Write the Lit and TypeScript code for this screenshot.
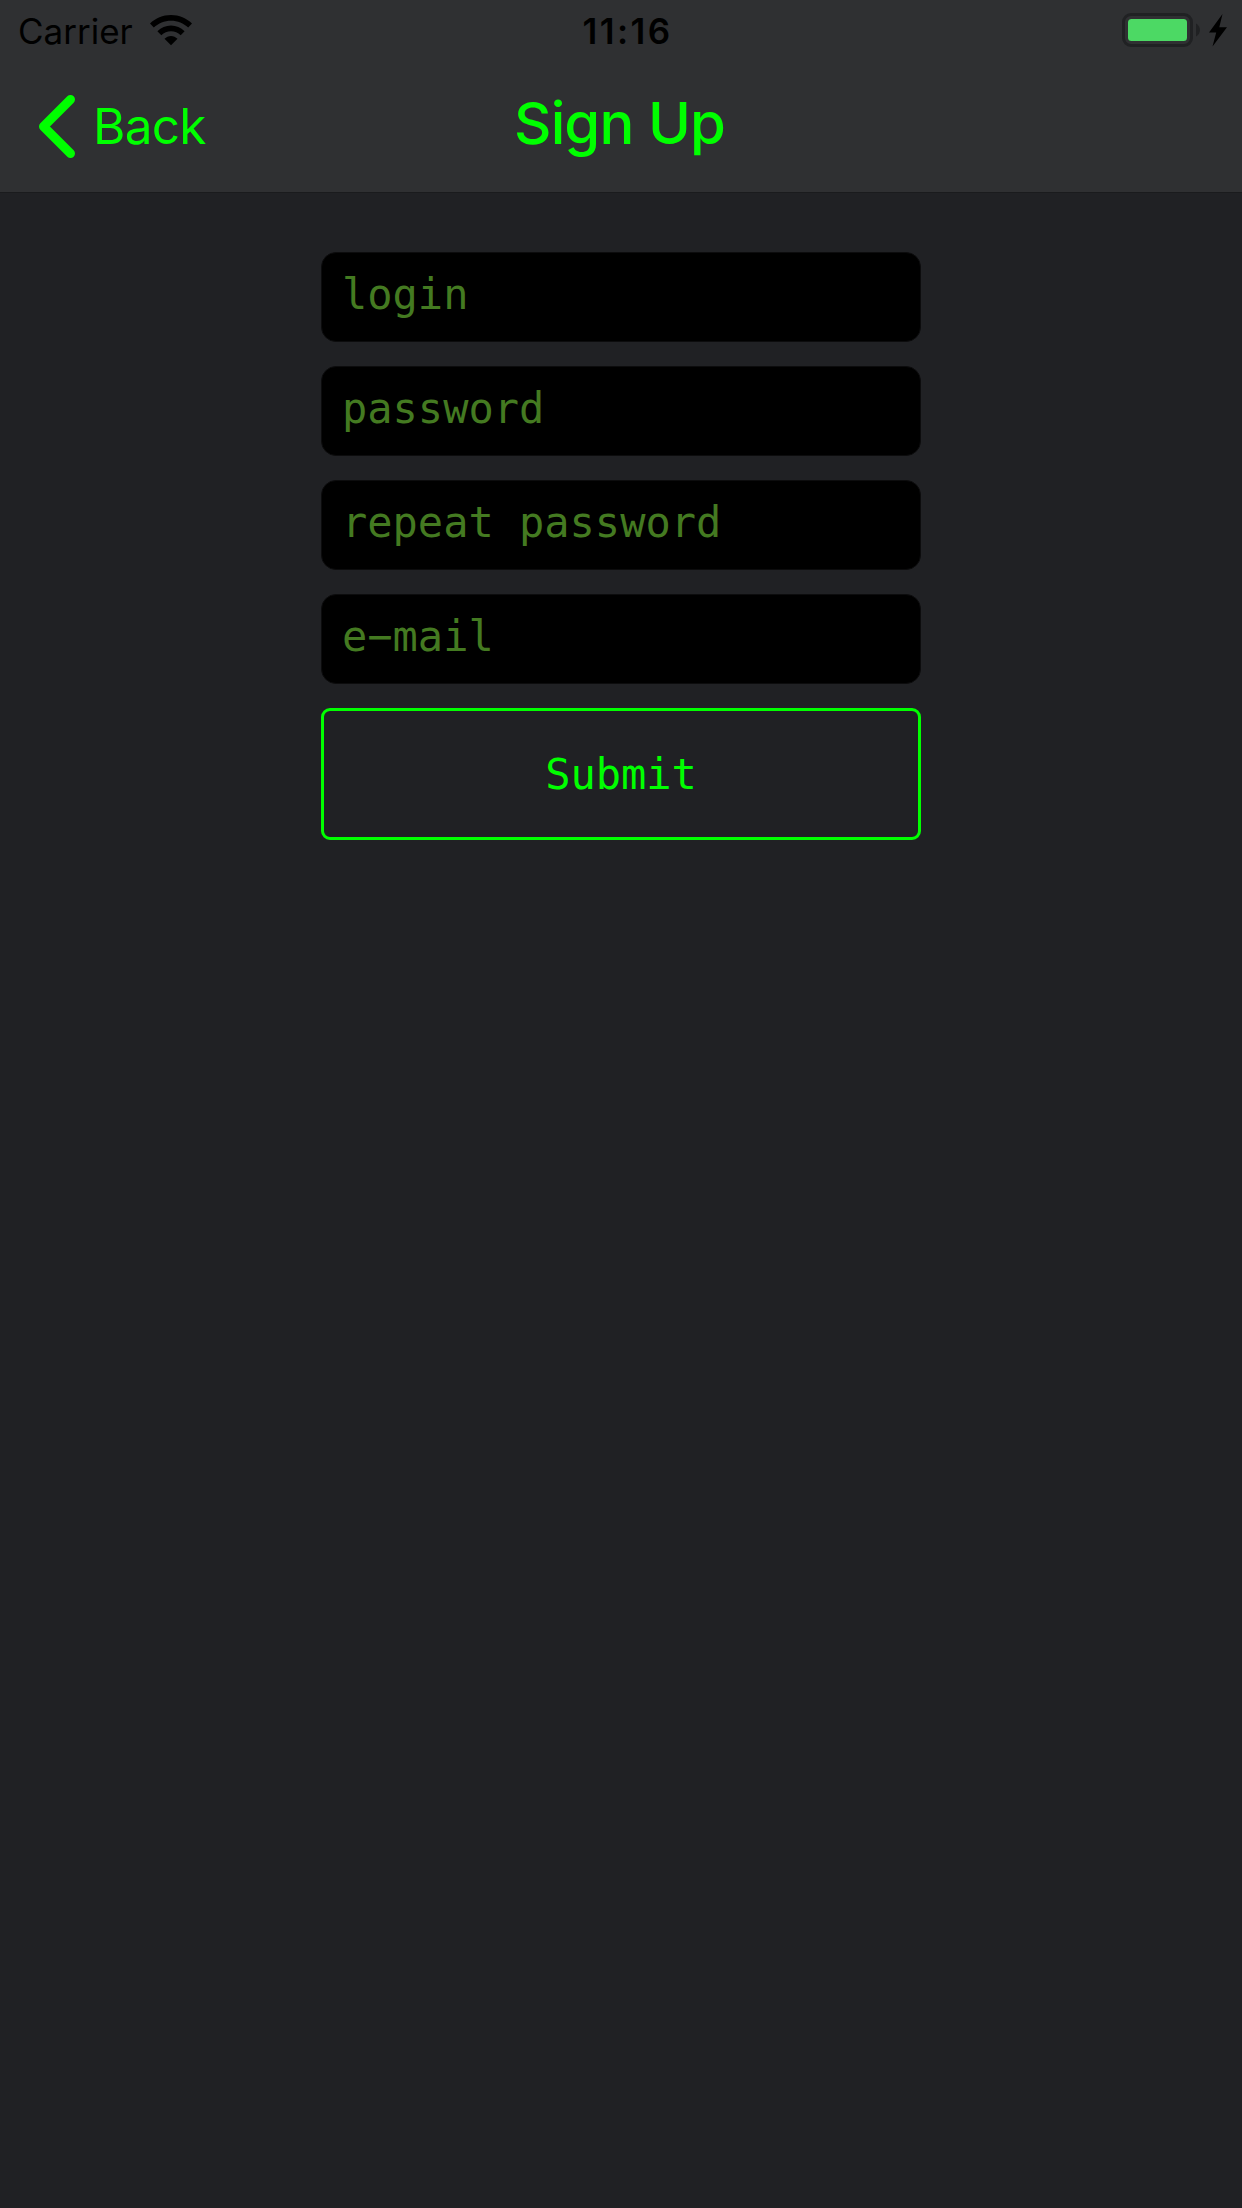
import { LitElement, html, css } from "lit";
import { customElement } from "lit/decorators.js";

@customElement("status-bar")
class StatusBar extends LitElement {
  static styles = css`
    :host {
      display: grid;
      grid-template-columns: 1fr auto 1fr;
      height: 60px;
      padding: 0 15px 0 18px;
      color: #000;
      font: 400 35px/62px Inter, "Liberation Sans", sans-serif;
    }
    .left { display: flex; gap: 17px; }
    .carrier { width: 115px; white-space: nowrap; }
    .wifi { margin-top: 14px; }
    .time { font-weight: 600; padding-left: 10px; letter-spacing: 2.4px; }
    .right { display: flex; justify-content: flex-end; gap: 9px; }
    .battery { margin-top: 12px; }
    .bolt { margin-top: 14px; }
    svg { display: block; flex: none; }
  `;
  render() {
    return html`
      <div class="left">
        <span class="carrier">Carrier</span>
        <svg class="wifi" width="42" height="32" viewBox="0 0 42 32">
          <path d="M0 9.4C5.5 4 12.8 .9 21 .9S36.5 4 42 9.4L38.2 13.6C33.5 9.2 27.7 6.8 21 6.8S8.500 9.200 3.800 13.600Z" />
          <path d="M7.400 17.200C11.200 13.700 15.800 11.500 21 11.500S30.800 13.700 34.600 17.200L30.700 21.200C28 18.700 24.700 17.300 21 17.300S14 18.700 11.300 21.200Z" />
          <path d="M14.500 24.700C16.300 23 18.500 21.900 21 21.900S25.700 23 27.500 24.700L21 31.200Z" />
        </svg>
      </div>
      <div class="time">11:16</div>
      <div class="right">
        <svg class="battery" width="78" height="36" viewBox="0 0 78 36">
          <rect x="1.500" y="2.500" width="68" height="31" rx="7.500" fill="none" stroke="#202123" stroke-width="3" />
          <path d="M74 11.500C79.300 14.500 79.300 21.500 74 24.500Z" fill="#202123" />
          <rect x="6" y="7" width="59" height="22" rx="3.500" fill="#4cd964" />
        </svg>
        <svg class="bolt" width="18" height="33" viewBox="0 0 18 33">
          <path d="M13.500 0 0 18.500H7.200L3.500 32.500 18 13.200H10.300Z" />
        </svg>
      </div>
    `;
  }
}

@customElement("nav-bar")
class NavBar extends LitElement {
  static styles = css`
    :host {
      display: grid;
      grid-template-columns: 1fr auto 1fr;
      height: 132px;
      padding: 0 38px;
      color: #0f0;
      font-family: Inter, "Liberation Sans", sans-serif;
    }
    .back { display: flex; gap: 17px; font-size: 49.5px; line-height: 132px; letter-spacing: -0.7px; }
    .chevron { margin-top: 34px; flex: none; }
    .title { padding-right: 3px; font-size: 58px; font-weight: 500; line-height: 127px; letter-spacing: -0.9px; }
  `;
  render() {
    return html`
      <div class="back">
        <svg class="chevron" width="38" height="66" viewBox="0 0 38 66">
          <path d="M32.500 5.500 5.500 32.500 32.500 59.500" fill="none" stroke="#0f0" stroke-width="9" stroke-linecap="round" stroke-linejoin="round" />
        </svg>
        <span class="label">Back</span>
      </div>
      <div class="title">Sign Up</div>
    `;
  }
}

@customElement("app-root")
class AppRoot extends LitElement {
  static styles = css`
    :host {
      display: flex;
      flex-direction: column;
      height: 2208px;
      background: #202124;
    }
    .header { background: #2f3032; border-bottom: 1px solid #1a1b1d; }
    .form {
      display: flex;
      flex-direction: column;
      gap: 24px;
      width: 600px;
      margin: 59px auto 0;
    }
    .field, .submit {
      box-sizing: border-box;
      margin: 0;
      font: 42px "DejaVu Sans Mono", monospace;
      outline: none;
    }
    .field {
      width: 100%;
      height: 90px;
      padding: 0 20px 6px;
      border: 1px solid #0c0c0d;
      border-radius: 15px;
      background: #000;
      color: #0f0;
    }
    .field::placeholder { color: #447a21; opacity: 1; }
    .submit {
      height: 132px;
      padding: 0;
      border: 3px solid #0f0;
      border-radius: 9px;
      background: none;
      color: #0f0;
    }
  `;
  private fields = [
    { hint: "login", type: "text" },
    { hint: "password", type: "password" },
    { hint: "repeat password", type: "password" },
    { hint: "e\u2212mail", type: "text" },
  ];
  render() {
    return html`
      <div class="header">
        <status-bar></status-bar>
        <nav-bar></nav-bar>
      </div>
      <div class="form">
        ${this.fields.map((f) => html`<input class="field" type=${f.type} placeholder=${f.hint} />`)}
        <button class="submit">Submit</button>
      </div>
    `;
  }
}
